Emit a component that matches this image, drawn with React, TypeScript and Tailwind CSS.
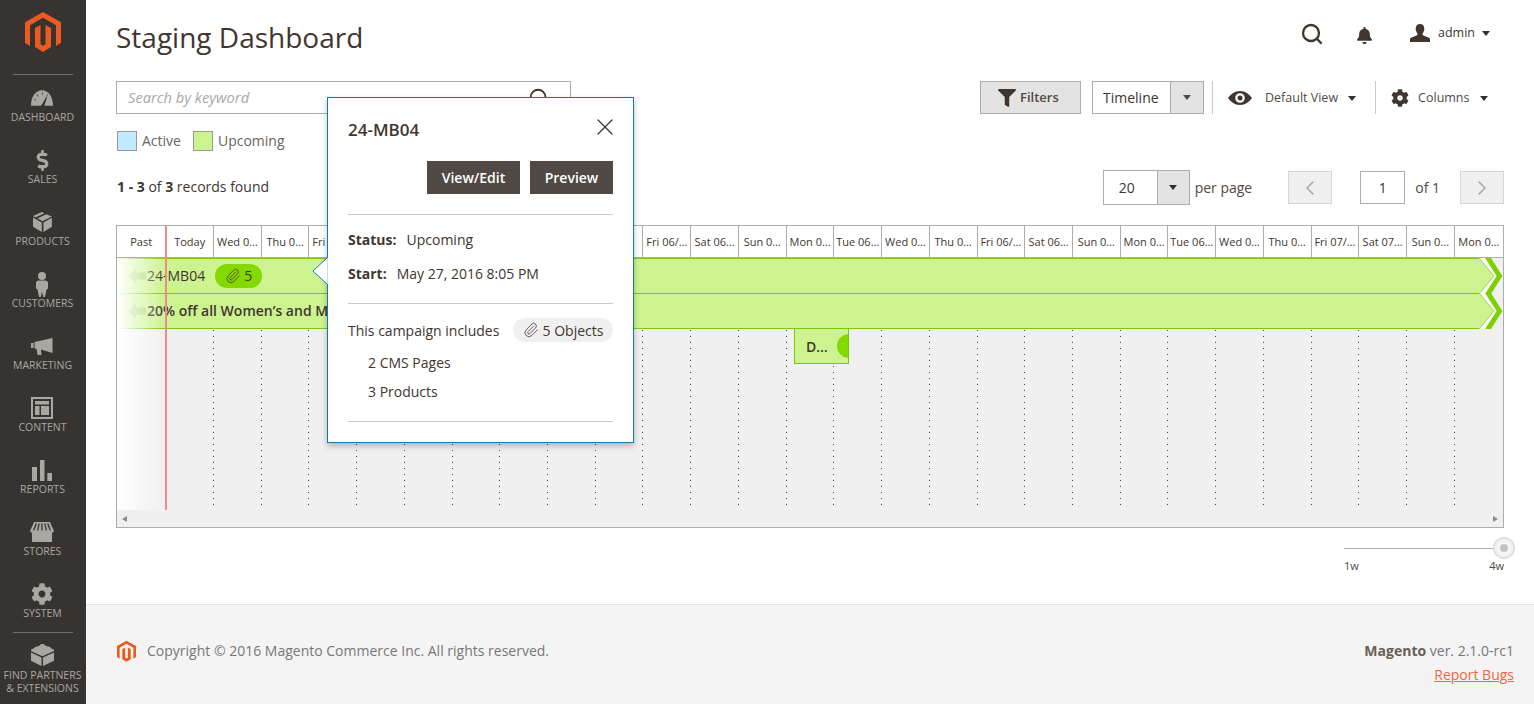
import React from "react";
import { FaBell, FaCog, FaDollarSign, FaFilter } from "react-icons/fa";
import { Paperclip, X, Search, ChevronLeft, ChevronRight } from "lucide-react";

const Logo = ({ className }: { className: string }) => (
  <svg viewBox="0 0 36 41" className={className} fill="currentColor">
    <path d="M18 0 36 10.3V31l-5 3V13.2L18 5.7 5 13.2V34l-5-3V10.3Z" />
    <path d="M10 16 15.5 13V32.3L18 33.8l2.500-1.500V13L26 16V35l-8 5-8-5Z" />
  </svg>
);

const Gauge = () => (
  <svg viewBox="0 0 24 17" className="h-[16px] w-[22px]" fill="#aaa6a0">
    <path fillRule="evenodd" d="M0 17C0 7 5 0 12 0s12 7 12 17H14.500l3-9-1-.5-4.500 8-1.500 1.500ZM12 2v3h.6V2ZM6 4.500 7.500 7 8 6.600 6.500 4.200ZM18 4.300 16.500 6.500 17 7l1.500-2.300ZM3 10l2.500 1.400.3-.5L3.300 9.500Z" />
  </svg>
);
const BoxI = () => (
  <svg viewBox="0 0 20 21" className="h-[20px] w-[19px]" fill="#aaa6a0" preserveAspectRatio="none">
    <path d="M9.400 0 0 4.300l2.600 1.500L12 1.300ZM14 2.300 4.600 6.800 6.800 8 9.900 9.700 19.800 4.700ZM0 5.700V15.500l9.200 5.500V11ZM19.800 6 11 11V21L19.800 15.500Z" />
  </svg>
);
const Person = () => (
  <svg viewBox="0 0 12 25" className="h-[25px] w-[12px]" fill="#aaa6a0">
    <circle cx="6" cy="4" r="4" />
    <path d="M2 8.500h8l2 1.500 0 6.500-1.500 1L9 25H7.300L6 20l-1.300 5H3L1.500 17.500 0 16.500V10Z" />
  </svg>
);
const Megaphone = () => (
  <svg viewBox="0 0 22 17" className="h-[17px] w-[22px]" fill="#aaa6a0">
    <path d="M0 5h2.500v5H0ZM3.500 4 21.500 0V15L10 11.500 10.500 17H6.500L5.500 10.800 3.500 10.500Z" />
  </svg>
);
const ContentI = () => (
  <svg viewBox="0 0 22 22" className="h-[22px] w-[22px]" fill="#aaa6a0">
    <path fillRule="evenodd" d="M0 0h22v22H0ZM2 2v18h18V2ZM4 4h14v3.500H4ZM4 9h4.500v9H4ZM10 9h8v9h-8Z" />
  </svg>
);
const Bars = () => (
  <svg viewBox="0 0 20 21" className="h-[21px] w-[20px]" fill="#aaa6a0">
    <path d="M0 7h5v14H0ZM8 0h4.500v21H8ZM15.300 13H20v8h-4.700Z" />
  </svg>
);
const StoreI = () => (
  <svg viewBox="0 0 24 20" className="h-[20px] w-[24px]" fill="#aaa6a0">
    <path fillRule="evenodd" d="M4 0h16l4 9-1 1.500h-1V20H2V10.500H1L0 9ZM5.500 1.500 3 8.500h1.300L7 1.500ZM8.500 1.500 7 8.500h1.300l1.500-7ZM11.300 1.500v7h1.300v-7ZM14.200 1.500l1.500 7H17l-1.500-7ZM17 1.500l2.700 7H21l-2.500-7Z" />
  </svg>
);
const Lego = () => (
  <svg viewBox="0 0 24 23" className="h-[22px] w-[23px]" fill="#aaa6a0">
    <path d="M12 0c1.500 0 2.300.6 2.300 1.400l4 1.600c1.500 0 2.500.6 2.500 1.500L24 6v1.300L11.800 12.800 0 7.300V6l3.500-1.700c0-1 1-1.500 2.500-1.500l3.500-1.500C9.500.6 10.500 0 12 0Z" />
    <path d="M0 8.800 11 14V23L0 17.500ZM24 8.800V17.500L12.500 23V14Z" />
  </svg>
);

const nav: [string, React.ReactNode][] = [
  ["DASHBOARD", <Gauge />],
  ["SALES", <FaDollarSign className="h-[21px] w-[21px] text-[#aaa6a0]" />],
  ["PRODUCTS", <BoxI />],
  ["CUSTOMERS", <Person />],
  ["MARKETING", <Megaphone />],
  ["CONTENT", <ContentI />],
  ["REPORTS", <Bars />],
  ["STORES", <StoreI />],
  ["SYSTEM", <FaCog className="h-[22px] w-[22px] text-[#aaa6a0]" />],
];

const days = [
  "Past", "Today", "Wed 0…", "Thu 0…", "Fri 06/…", "", "", "", "", "", "",
  "Fri 06/…", "Sat 06…", "Sun 0…", "Mon 0…", "Tue 06…", "Wed 0…", "Thu 0…",
  "Fri 06/…", "Sat 06…", "Sun 0…", "Mon 0…", "Tue 06…", "Wed 0…", "Thu 0…",
  "Fri 07/…", "Sat 07…", "Sun 0…", "Mon 0…",
];

const Caret = ({ className = "" }: { className?: string }) => (
  <span className={`inline-block h-0 w-0 border-x-[4.5px] border-t-[5px] border-x-transparent border-t-[#303030] ${className}`} />
);

const Eye = () => (
  <svg viewBox="0 0 24 14" className="h-[14px] w-[24px]" fill="#41362f">
    <path fillRule="evenodd" d="M12 0c5.500 0 9.500 3.500 12 7-2.500 3.500-6.500 7-12 7S2.500 10.500 0 7c2.500-3.500 6.500-7 12-7Zm0 2.200a4.800 4.800 0 1 0 0 9.600 4.800 4.800 0 0 0 0-9.600Zm0 2.300a2.500 2.500 0 1 1 0 5 2.500 2.500 0 0 1 0-5Z" />
  </svg>
);
const UserI = () => (
  <svg viewBox="0 0 20 18" className="h-[18px] w-[20px]" fill="#41362f">
    <path d="M10 0c2.800 0 4.300 2 4.300 4.800 0 2-.8 3.800-2 5 .3 1.200 1 1.700 3 2.400 2.500.9 4.700 1.500 4.700 3V18H0v-2.800c0-1.500 2.200-2.100 4.700-3 2-.7 2.700-1.200 3-2.400-1.200-1.200-2-3-2-5C5.700 2 7.200 0 10 0Z" />
  </svg>
);

const Chevrons = () => (
  <svg viewBox="0 0 24 36" className="h-[36px] w-[24px] shrink-0">
    <path d="M0 0H9L20.500 18 9 36H0Z" fill="#fff" />
    <path d="M0 .5H.5L15 18 .5 35.500H0Z" fill="#cdf391" />
    <path d="M0 .5H.5L15 18 .5 35.500H0" fill="none" stroke="#9ed84e" strokeWidth="1" />
    <path d="M7.700 -2 20.500 18 7.700 38" fill="none" stroke="#7ed000" strokeWidth="5" />
  </svg>
);

const BackArrow = () => (
  <svg viewBox="0 0 18 16" className="h-[16px] w-[18px] shrink-0" fill="#a6dc6a">
    <path d="M0 8 8 0V4.500H18V11.500H8V16Z" />
  </svg>
);

const Bar = ({ children, top }: { children: React.ReactNode; top: string }) => (
  <div className={`flex h-[36px] ${top}`}>
    <div className="flex min-w-0 flex-1 items-center gap-[1px] overflow-hidden border-y border-[#7cc70c] bg-[#cdf391] pb-[1px] pl-[11px] text-[14px] whitespace-nowrap text-[#41362f]">
      {children}
    </div>
    <Chevrons />
  </div>
);

export default function App() {
  return (
    <div className="flex h-[704px] w-[1534px] overflow-hidden bg-white font-['Open_Sans',sans-serif] text-[14px] text-[#41362f]">
      <aside className="flex h-full w-[86px] shrink-0 flex-col items-center bg-[#373330] pr-[1px] text-[#aaa6a0]">
        <div className="flex h-[75px] w-[60px] items-start justify-center border-b border-[#736d67] pt-[12px]">
          <Logo className="h-[41px] w-[36px] text-[#eb5a1e]" />
        </div>
        <div className="flex flex-col pt-[11px]">
          {nav.map(([label, icon], i) => (
            <div key={label} className={`flex h-[50px] flex-col items-center ${i < 8 ? "mb-[12px]" : ""}`}>
              <div className="flex h-[24px] items-center justify-center">{icon}</div>
              <div className="mt-[-1px] text-[10.500px] leading-[16px]">{label}</div>
            </div>
          ))}
        </div>
        <div className="flex w-[60px] justify-center border-t border-[#736d67] pt-[11px]">
          <Lego />
        </div>
        <div className="mt-[3px] text-center text-[10.500px] leading-[13px] whitespace-nowrap">
          FIND PARTNERS
          <br />& EXTENSIONS
        </div>
      </aside>

      <main className="relative flex min-w-0 flex-1 flex-col">
        <div className="flex-1 px-[30px]">
          <header className="flex h-[81px] items-start justify-between">
            <h1 className="mt-[16px] text-[28px] leading-[42px] font-normal text-[#41362f]">Staging Dashboard</h1>
            <div className="mt-[22px] mr-[14px] flex items-start">
              <Search size={24} strokeWidth={2.300} className="text-[#41362f]" />
              <FaBell className="mt-[5px] ml-[32px] h-[17px] w-[17px] text-[#41362f]" />
              <div className="mt-[2px] ml-[37px]"><UserI /></div>
              <span className="mt-[2px] ml-[8px] text-[12.500px] leading-[18px] text-[#41362f]">admin</span>
              <Caret className="mt-[9px] ml-[7px]" />
            </div>
          </header>

          <div className="flex h-[33px] items-stretch">
            <div className="flex w-[455px] items-center justify-between border border-[#adadad] pr-[20px] pl-[11px]">
              <span className="text-[14.700px] text-[#a9a9a9] italic">Search by keyword</span>
              <Search size={22} className="text-[#41362f]" />
            </div>
            <div className="ml-[409px] flex w-[101px] items-center gap-[4px] border border-[#adadad] bg-[#e3e3e3] pl-[17px] text-[#514943]">
              <FaFilter className="h-[18px] w-[18px] text-[#41362f]" />
              <span className="text-[13px] font-semibold">Filters</span>
            </div>
            <div className="ml-[11px] flex w-[112px] border border-[#adadad]">
              <div className="mb-[1px] flex flex-1 items-center pl-[10px] text-[14px]">Timeline</div>
              <div className="flex w-[33px] items-center justify-center border-l border-[#adadad] bg-[#e3e3e3]">
                <Caret className="!border-t-[#514943]" />
              </div>
            </div>
            <div className="ml-[8px] w-px bg-[#cacaca]" />
            <div className="ml-[15px] flex items-center">
              <Eye />
              <span className="mt-[2px] ml-[13px] text-[12.500px] text-[#514943]">Default View</span>
              <Caret className="mt-[2px] ml-[10px]" />
            </div>
            <div className="ml-[19px] w-px bg-[#cacaca]" />
            <div className="ml-[15px] flex items-center">
              <FaCog className="h-[18px] w-[18px] text-[#41362f]" />
              <span className="mt-[1px] ml-[9px] text-[12.500px] text-[#514943]">Columns</span>
              <Caret className="mt-[2px] ml-[10px]" />
            </div>
          </div>

          <div className="mt-[17px] flex h-[20px] items-center gap-[5px]">
            <span className="ml-[1px] h-[20px] w-[20px] border border-[#9a9a9a] bg-[#bfeaff]" />
            <span className="mb-[2px] text-[#6b6560]">Active</span>
            <span className="ml-[7px] h-[20px] w-[20px] border border-[#9a9a9a] bg-[#cdf391]" />
            <span className="mb-[2px] text-[#6b6560]">Upcoming</span>
          </div>

          <div className="mt-[19px] flex h-[35px] items-center whitespace-nowrap">
            <div className="mb-[3px] ml-[1px] text-[14px]">
              <b className="font-bold">1 - 3</b> of <b className="font-bold">3</b> records found
            </div>
            <div className="ml-auto flex h-[35px] w-[87px] border border-[#adadad]">
              <div className="flex flex-1 items-center pl-[15px]">20</div>
              <div className="flex w-[32px] items-center justify-center border-l border-[#adadad] bg-[#e3e3e3]"><Caret /></div>
            </div>
            <span className="ml-[5px] text-[#514943]">per page</span>
            <div className="ml-[36px] flex h-[33px] w-[44px] items-center justify-center border border-[#d6d6d6] bg-[#f0f0f0] text-[#a8a8a8]"><ChevronLeft size={24} strokeWidth={1.500} /></div>
            <div className="ml-[28px] flex h-[33px] w-[45px] items-center justify-center border border-[#adadad]">1</div>
            <span className="ml-[10px] text-[#514943]">of 1</span>
            <div className="ml-[20px] flex h-[33px] w-[44px] items-center justify-center border border-[#d6d6d6] bg-[#f0f0f0] text-[#a8a8a8]"><ChevronRight size={24} strokeWidth={1.500} /></div>
          </div>

          <section className="relative mt-[20px] h-[303px] w-[1388px] border border-[#adadad] bg-[#f0f0f0]">
            <div className="grid h-[32px] grid-cols-[48.300px_repeat(27,47.730px)_1fr] border-b border-[#adadad] bg-white">
              {days.map((d, i) => (
                <div key={i} className={`flex items-center justify-center overflow-hidden pt-[1px] text-[11px] whitespace-nowrap ${i ? "border-l border-[#adadad]" : ""}`}>{d}</div>
              ))}
            </div>
            <div className="relative h-[252px]">
              <div className="absolute inset-0 grid grid-cols-[48.300px_repeat(27,47.730px)_1fr]">
                {days.map((d, i) => (
                  <div key={i} className="pt-[6px]">
                    {i > 1 ? <div className="h-full w-px bg-[repeating-linear-gradient(to_bottom,#444_0,#444_1px,transparent_1px,transparent_6px)]" /> : null}
                  </div>
                ))}
              </div>
              <div className="absolute inset-x-0 top-0 flex flex-col">
                <Bar top="">
                  <BackArrow />
                  <span>24-MB04</span>
                  <span className="ml-[9px] flex h-[24px] w-[47px] items-center justify-center gap-[3px] rounded-[12px] bg-[#84d900]">
                    <Paperclip size={16} strokeWidth={1.200} />5
                  </span>
                </Bar>
                <Bar top="-mt-px">
                  <BackArrow />
                  <span className="font-semibold">20% off all Women’s and Men’s Sale</span>
                </Bar>
              </div>
              <div className="absolute top-[70px] left-[677px] flex h-[36px] w-[55px] items-center overflow-hidden border border-[#7cc70c] bg-[#cdf391] pl-[11px] font-semibold">
                D…
                <span className="ml-[9px] h-[24px] w-[24px] shrink-0 rounded-full bg-[#84d900]" />
              </div>
              <div className="absolute inset-y-0 left-0 w-[48px] bg-gradient-to-r from-white to-transparent" />
            </div>
            <div className="flex h-[17px] items-center justify-between px-[5px]">
              <span className="h-0 w-0 border-y-[3.500px] border-r-[5px] border-y-transparent border-r-[#8a8a8a]" />
              <span className="h-0 w-0 border-y-[3.500px] border-l-[5px] border-y-transparent border-l-[#8a8a8a]" />
            </div>
            <div className="absolute top-0 bottom-[17px] left-[48px] w-[2px] bg-[#f08a8a]" />
          </section>

          <div className="relative mt-[12px] ml-[1228px] h-[48px] w-[160px] pt-[8px]">
            <div className="h-px bg-[#adadad]" />
            <div className="mt-[9px] flex justify-between text-[11px] leading-[16px] text-[#514943]">
              <span>1w</span>
              <span>4w</span>
            </div>
            <div className="absolute top-[-3px] right-[-11px] flex h-[22px] w-[22px] items-center justify-center rounded-full border border-[#d0d0d0] bg-[#f5f5f5] shadow-[inset_0_0_3px_#ddd]">
              <span className="h-[8px] w-[8px] rounded-full bg-[#c4c4c4]" />
            </div>
          </div>
        </div>

        <footer className="flex h-[100px] shrink-0 justify-between border-t border-[#e3e3e3] bg-[#f4f4f4] pr-[20px] pl-[31px]">
          <div className="flex items-start pt-[35px]">
            <Logo className="h-[23px] w-[19px] text-[#eb5a1e]" />
            <span className="ml-[11px] text-[14px] text-[#777]">Copyright © 2016 Magento Commerce Inc. All rights reserved.</span>
          </div>
          <div className="flex flex-col items-end pt-[35px] text-[14px] text-[#777]">
            <div><b className="font-bold text-[#676056]">Magento</b> ver. 2.1.0-rc1</div>
            <a className="mt-[3px] text-[#f2653e] underline">Report Bugs</a>
          </div>
        </footer>

        <div className="absolute top-[97px] left-[241px] h-[346px] w-[307px] border border-[#1279b5] bg-white px-[20px] text-[#41362f] shadow-[0_3px_6px_rgba(0,0,0,0.25)]">
          <svg viewBox="0 0 16 30" className="absolute top-[158px] left-[-16px] h-[30px] w-[16px]">
            <path d="M16 1 1 15 16 29Z" fill="#fff" stroke="#1279b5" strokeWidth="1" />
            <path d="M15.500 2V28H17V2Z" fill="#fff" />
          </svg>
          <div className="flex items-start justify-between">
            <div className="mt-[20px] text-[17px] leading-[24px] font-semibold">24-MB04</div>
            <X size={28} strokeWidth={1.100} className="mt-[15px] mr-[-6px]" />
          </div>
          <div className="mt-[19px] flex justify-end gap-[10px]">
            <div className="flex h-[33px] w-[93px] items-center justify-center bg-[#514943] font-semibold text-white">View/Edit</div>
            <div className="flex h-[33px] w-[83px] items-center justify-center bg-[#514943] font-semibold text-white">Preview</div>
          </div>
          <div className="mt-[20px] h-px bg-[#cacaca]" />
          <div className="mt-[15px] leading-[20px]"><b className="mr-[10px] font-bold">Status:</b>Upcoming</div>
          <div className="mt-[14px] leading-[20px]"><b className="mr-[10px] font-bold">Start:</b>May 27, 2016 8:05 PM</div>
          <div className="mt-[19px] h-px bg-[#cacaca]" />
          <div className="mt-[14px] flex h-[24px] items-center justify-between">
            <span>This campaign includes</span>
            <span className="flex h-[24px] w-[100px] items-center justify-center gap-[4px] rounded-[12px] bg-[#f0f0f0]">
              <Paperclip size={16} strokeWidth={1.200} />5 Objects
            </span>
          </div>
          <div className="mt-[11px] pl-[20px] leading-[20px]">2 CMS Pages</div>
          <div className="mt-[9px] pl-[20px] leading-[20px]">3 Products</div>
          <div className="mt-[19px] h-px bg-[#cacaca]" />
        </div>
      </main>
    </div>
  );
}
